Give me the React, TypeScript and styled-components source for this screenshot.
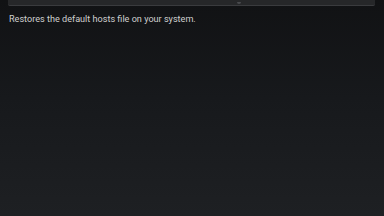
import {FC} from "react";
import styled, {createGlobalStyle} from "styled-components";

const GlobalStyle = createGlobalStyle`
  html, body {
    margin: 0;
    padding: 0;
    height: 100%;
  }

  body {
    background: linear-gradient(180deg, #111214 0%, #17191c 45%, #1e2023 100%);
    font-family: Roboto, "Liberation Sans", sans-serif;
    overflow: hidden;
  }

  #root {
    height: 100%;
  }
`;

const StyledPage = styled.div`
  height: 216px;
  padding: 0 8px;
  box-sizing: border-box;
`;

const StyledCard = styled.div`
  height: 5px;
  margin-right: 1px;
  background-color: #262729;
  border-bottom: 1px solid #3a3b3e;
  border-radius: 0 0 2px 2px;
  display: flex;
  justify-content: flex-start;
  padding-left: 229px;
`;

const StyledArrow = styled.div`
  width: 4px;
  height: 2px;
  margin-top: 2px;
  background-color: #4a4b4e;
  border-radius: 0 0 2px 2px;
`;

const StyledP = styled.p`
  margin: 7px 0 0 1px;
  font-size: 9.1px;
  line-height: 12px;
  color: #cfcfcf;
`;

const App: FC = () => {
    return (
        <>
            <GlobalStyle/>
            <StyledPage>
                <StyledCard>
                    <StyledArrow/>
                </StyledCard>
                <StyledP>Restores the default hosts file on your system.</StyledP>
            </StyledPage>
        </>
    );
};

export default App;
